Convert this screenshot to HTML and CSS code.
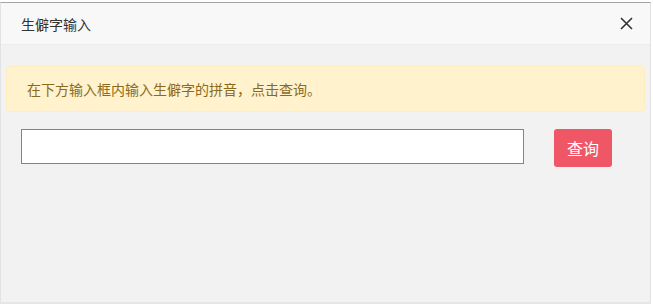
FILE: index.html
```html
<!DOCTYPE html>
<html lang="zh">
<head>
<meta charset="utf-8">
<title>生僻字输入</title>
<link rel="stylesheet" href="styles.css">
</head>
<body>
<div class="dialog">
  <div class="header">
    <span class="title">生僻字输入</span>
    <svg class="close" width="13" height="13" viewBox="0 0 13 13"><path d="M1 1L12 12M12 1L1 12" stroke="#333" stroke-width="1.6" fill="none"/></svg>
  </div>
  <div class="body">
    <div class="alert">在下方输入框内输入生僻字的拼音，点击查询。</div>
    <div class="row">
      <input class="field" type="text">
      <button class="btn">查询</button>
    </div>
  </div>
</div>
</body>
</html>
```
FILE: styles.css
```css
html, body { margin: 0; padding: 0; background: #fff; }
body { font-family: "Microsoft YaHei", "Noto Sans CJK SC", sans-serif; }
.dialog {
  margin-top: 2px;
  width: 649px;
  height: 299px;
  border-top: 1px solid #a4a4a4;
  border-left: 1px solid #e2e2e2;
  border-right: 1px solid #e2e2e2;
  border-bottom: 2px solid #e6e6e6;
  background: #f2f2f2;
  display: flex;
  flex-direction: column;
}
.header {
  height: 41px;
  background: #f8f8f8;
  border-bottom: 1px solid #ececec;
  display: flex;
  align-items: center;
  justify-content: space-between;
  padding: 0 17px 0 20px;
}
.title { font-size: 14px; color: #333; }
.close { display: block; }
.body { padding: 21px 5px 0 5px; }
.alert {
  height: 44px;
  border: 1px solid #ffedbd;
  background: #fff2cc;
  border-radius: 4px;
  color: #8a6a1e;
  font-size: 14px;
  display: flex;
  align-items: center;
  padding-left: 20px;
}
.row {
  display: flex;
  align-items: flex-start;
  margin-top: 17px;
  padding-left: 15px;
}
.field {
  box-sizing: border-box;
  height: 35px;
  width: 503px;
  border: 1px solid #2fae8c;
  background: #fff;
  outline: none;
  margin: 0;
  padding: 0 6px;
}
.btn {
  margin-left: 30px;
  width: 58px;
  height: 38px;
  border: none;
  border-radius: 3px;
  background: #ef5767;
  color: #fff;
  font-size: 16px;
  font-family: inherit;
  padding: 0;
}
```
